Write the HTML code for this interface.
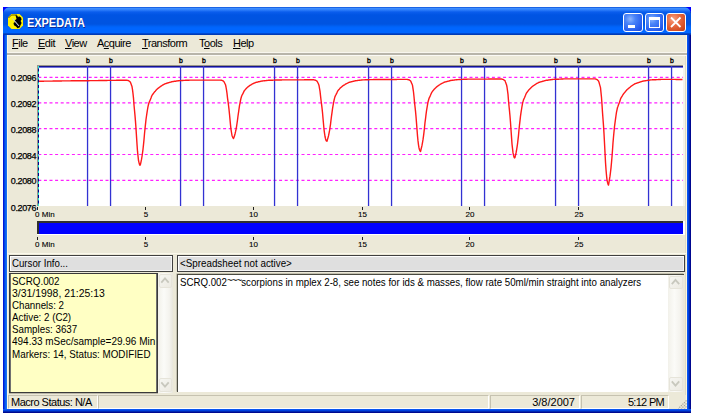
<!DOCTYPE html>
<html><head><meta charset="utf-8">
<style>
*{margin:0;padding:0;box-sizing:border-box}
html,body{width:703px;height:416px;overflow:hidden;background:#fff;font-family:"Liberation Sans",sans-serif;font-size:11px;color:#000;white-space:nowrap;letter-spacing:-0.5px}
.abs{position:absolute}
#win{left:3px;top:7px;width:688px;height:406px;background:linear-gradient(to right,#0018d8 0,#0018d8 1px,#0044e4 1px,#0044e4 2px,#0a5ff0 2px,#0a5ff0 3px,#1a70f2 3px,#1a70f2 4px,#0058ee 4px,#0058ee 684px,#0a55f0 684px,#0a55f0 685px,#0040e0 685px,#0040e0 686px,#0028b0 686px,#0028b0 687px,#000890 687px)}
#title{left:3px;top:7px;width:688px;height:28px;border-radius:7px 7px 0 0;
 background:linear-gradient(to bottom,#0a4fd6 0,#3d8eff 1.5px,#2c7cfa 3px,#0a5ded 5px,#0054e3 8px,#0054e0 17px,#0062f6 19.5px,#0066ff 21px,#0066ff 25.5px,#0048d0 26.5px,#0034a8 28px)}
#cl{left:3px;top:7px;width:5px;height:5px;background:#0000ff}
#cr{left:686px;top:7px;width:5px;height:5px;background:#0000ff}
#client{left:7px;top:35px;width:680px;height:374px;background:#ece9d8}
#bottomb{left:3px;top:409px;width:688px;height:4px;background:linear-gradient(to bottom,#0a55f0 0,#0a55f0 1px,#0040e0 1px,#0040e0 2px,#0028b0 2px,#0028b0 3px,#000890 3px)}
.ttl{left:26.5px;top:15px;font-weight:bold;font-size:13px;color:#fff;letter-spacing:0;transform:scaleX(0.84);transform-origin:0 0;text-shadow:1px 1px 0 #0a2a9a}
.btn{top:12.5px;width:19.5px;height:19.5px;border:1px solid #fff;border-radius:3px;
 background:radial-gradient(circle at 35% 30%,#8cb4ff 0,#4a84f8 30%,#2a60f0 70%,#1a48d8 100%)}
.close{background:radial-gradient(circle at 35% 30%,#f8a080 0,#e86a40 40%,#d04a20 80%,#b83a10 100%)}
.menu{top:37px;height:13px;line-height:13px}
.u{text-decoration:underline;text-underline-offset:0.5px}
.hdr{height:17px;background:#dfdfdf;border:1px solid #404040;line-height:15px;letter-spacing:0;padding-left:2px;box-shadow:inset 1px 1px 0 #fff,inset -1px -1px 0 #f4f4f4}
.txt{line-height:12.1px}
#yel{left:9px;top:273px;width:149px;height:120px;background:#ffffc4;border:1px solid #3a3a3a;box-shadow:inset 1px 0 0 #707070,inset -1px 0 0 #707070,0 0.5px 0 #8a8878}
#ta{left:177px;top:274px;width:507px;height:118px;background:#fff;border-top:1px solid #4a4a40;border-left:1px solid #4a4a40;box-shadow:-0.5px -0.5px 0 #9a9888}
.sb{background:linear-gradient(to right,#f2f1ea,#fbfbf8 40%,#f4f3ee 75%,#e8e6dc)}
.sbtn{border:1px solid #e6e4da;border-radius:2px;background:linear-gradient(135deg,#f6f6f2,#eceae2)}
.panel{top:395px;height:14px;border-top:1px solid #c6c2b0;border-left:1px solid #c6c2b0;border-bottom:1px solid #fff;border-right:1px solid #fff;line-height:12px}
</style></head><body>
<div id="win" class="abs"></div>
<div id="cl" class="abs"></div><div id="cr" class="abs"></div>
<div id="title" class="abs"></div>
<div id="client" class="abs"></div>
<div class="abs" style="left:7px;top:35px;width:1px;height:374px;background:#fdf8e0"></div>
<div class="abs" style="left:686px;top:35px;width:1px;height:374px;background:#fdf8e0"></div>
<div class="abs" style="left:685px;top:55px;width:1px;height:340px;background:#dedac6"></div>
<div id="bottomb" class="abs"></div>
<div class="abs" style="left:8px;top:14px;width:16px;height:16px">
<svg width="16" height="16"><path d="M3.5,0 H11.5 L15,3.5 V11.5 L11.5,15 H3.5 L0,11.5 V3.5 Z" fill="#fff200"/>
<path d="M0.5,4 L3.5,1 H9" stroke="#6a5a00" stroke-width="1" fill="none"/>
<path d="M7.5,1 L9.5,1.8 L10,3.2 L11,2.3 L13,3.5 L13.6,5.5 L12.6,7 L13.6,9 L12.6,11 L11.6,13.5 L9.5,14.2 L8,12.5 L6,11.2 L5.5,9 L7,8 L6.6,6.5 L8.5,5 L8,3 Z" fill="#000"/>
<path d="M4.5,4.5 L11,12" stroke="#c8c8d8" stroke-width="1.1"/></svg></div>
<div class="abs ttl">EXPEDATA</div>
<div class="abs btn" style="left:623px"><div class="abs" style="left:4px;top:11px;width:7px;height:3px;background:#fff"></div></div>
<div class="abs btn" style="left:644.5px"><div class="abs" style="left:3.5px;top:3.5px;width:10.5px;height:10.5px;border:1px solid #fff;border-top-width:3px"></div></div>
<div class="abs btn close" style="left:666px">
<svg class="abs" style="left:2px;top:2.5px" width="16" height="14"><path d="M2,1.5 L11.5,11 M11.5,1.5 L2,11" stroke="#fff" stroke-width="1.8"/></svg></div>
<div class="abs menu" style="left:12px"><span class="u">F</span>ile</div>
<div class="abs menu" style="left:38px"><span class="u">E</span>dit</div>
<div class="abs menu" style="left:65px"><span class="u">V</span>iew</div>
<div class="abs menu" style="left:97px">A<span class="u">c</span>quire</div>
<div class="abs menu" style="left:142px"><span class="u">T</span>ransform</div>
<div class="abs menu" style="left:199px">T<span class="u">o</span>ols</div>
<div class="abs menu" style="left:233px"><span class="u">H</span>elp</div>
<div class="abs" style="left:7px;top:52px;width:680px;height:1px;background:#f8f6ee"></div>
<div class="abs" style="left:7px;top:53px;width:680px;height:2px;background:#b8b5aa"></div>
<div class="abs" style="left:7px;top:55px;width:680px;height:1px;background:#fbfaf5"></div>
<svg width="703" height="416" style="position:absolute;left:0;top:0;letter-spacing:0">
<rect x="683" y="65" width="2" height="141" fill="#f5f4ec"/>
<rect x="37" y="65" width="646" height="141" fill="#ffffff"/>
<rect x="37" y="65" width="646" height="1" fill="#9a9588"/>
<rect x="37" y="65" width="1" height="141" fill="#9a9588"/>
<rect x="38" y="66" width="645" height="1" fill="#14148c"/>
<rect x="38" y="67" width="645" height="1" fill="#7070e0"/>
<line x1="38.5" y1="66" x2="38.5" y2="206" stroke="#20f0d0" stroke-width="1"/>
<line x1="38.5" y1="66" x2="38.5" y2="206" stroke="#000090" stroke-width="1" stroke-dasharray="3,2.5" stroke-dashoffset="-2.5"/>
<line x1="39" y1="77.4" x2="683" y2="77.4" stroke="#ff20ff" stroke-width="1.1" stroke-dasharray="3,2.6" stroke-dashoffset="0.7"/>
<line x1="39" y1="102.9" x2="683" y2="102.9" stroke="#ff20ff" stroke-width="1.1" stroke-dasharray="3,2.6" stroke-dashoffset="0.7"/>
<line x1="39" y1="128.6" x2="683" y2="128.6" stroke="#ff20ff" stroke-width="1.1" stroke-dasharray="3,2.6" stroke-dashoffset="0.7"/>
<line x1="39" y1="154.5" x2="683" y2="154.5" stroke="#ff20ff" stroke-width="1.1" stroke-dasharray="3,2.6" stroke-dashoffset="0.7"/>
<line x1="39" y1="180.4" x2="683" y2="180.4" stroke="#ff20ff" stroke-width="1.1" stroke-dasharray="3,2.6" stroke-dashoffset="0.7"/>
<rect x="86.9" y="66" width="1.3" height="140" fill="#3232d2"/>
<text transform="translate(88.00,63) scale(0.88,1)" x="0" y="0" font-family="Liberation Sans" font-size="7.8" fill="#000" stroke="#000" stroke-width="0.4" text-anchor="middle">b</text>
<rect x="109.9" y="66" width="1.3" height="140" fill="#3232d2"/>
<text transform="translate(111.00,63) scale(0.88,1)" x="0" y="0" font-family="Liberation Sans" font-size="7.8" fill="#000" stroke="#000" stroke-width="0.4" text-anchor="middle">b</text>
<rect x="179.9" y="66" width="1.3" height="140" fill="#3232d2"/>
<text transform="translate(181.00,63) scale(0.88,1)" x="0" y="0" font-family="Liberation Sans" font-size="7.8" fill="#000" stroke="#000" stroke-width="0.4" text-anchor="middle">b</text>
<rect x="202.9" y="66" width="1.3" height="140" fill="#3232d2"/>
<text transform="translate(204.00,63) scale(0.88,1)" x="0" y="0" font-family="Liberation Sans" font-size="7.8" fill="#000" stroke="#000" stroke-width="0.4" text-anchor="middle">b</text>
<rect x="273.9" y="66" width="1.3" height="140" fill="#3232d2"/>
<text transform="translate(275.00,63) scale(0.88,1)" x="0" y="0" font-family="Liberation Sans" font-size="7.8" fill="#000" stroke="#000" stroke-width="0.4" text-anchor="middle">b</text>
<rect x="296.9" y="66" width="1.3" height="140" fill="#3232d2"/>
<text transform="translate(298.00,63) scale(0.88,1)" x="0" y="0" font-family="Liberation Sans" font-size="7.8" fill="#000" stroke="#000" stroke-width="0.4" text-anchor="middle">b</text>
<rect x="367.9" y="66" width="1.3" height="140" fill="#3232d2"/>
<text transform="translate(369.00,63) scale(0.88,1)" x="0" y="0" font-family="Liberation Sans" font-size="7.8" fill="#000" stroke="#000" stroke-width="0.4" text-anchor="middle">b</text>
<rect x="390.9" y="66" width="1.3" height="140" fill="#3232d2"/>
<text transform="translate(392.00,63) scale(0.88,1)" x="0" y="0" font-family="Liberation Sans" font-size="7.8" fill="#000" stroke="#000" stroke-width="0.4" text-anchor="middle">b</text>
<rect x="460.9" y="66" width="1.3" height="140" fill="#3232d2"/>
<text transform="translate(462.00,63) scale(0.88,1)" x="0" y="0" font-family="Liberation Sans" font-size="7.8" fill="#000" stroke="#000" stroke-width="0.4" text-anchor="middle">b</text>
<rect x="483.9" y="66" width="1.3" height="140" fill="#3232d2"/>
<text transform="translate(485.00,63) scale(0.88,1)" x="0" y="0" font-family="Liberation Sans" font-size="7.8" fill="#000" stroke="#000" stroke-width="0.4" text-anchor="middle">b</text>
<rect x="554.9" y="66" width="1.3" height="140" fill="#3232d2"/>
<text transform="translate(556.00,63) scale(0.88,1)" x="0" y="0" font-family="Liberation Sans" font-size="7.8" fill="#000" stroke="#000" stroke-width="0.4" text-anchor="middle">b</text>
<rect x="577.9" y="66" width="1.3" height="140" fill="#3232d2"/>
<text transform="translate(579.00,63) scale(0.88,1)" x="0" y="0" font-family="Liberation Sans" font-size="7.8" fill="#000" stroke="#000" stroke-width="0.4" text-anchor="middle">b</text>
<rect x="647.9" y="66" width="1.3" height="140" fill="#3232d2"/>
<text transform="translate(649.00,63) scale(0.88,1)" x="0" y="0" font-family="Liberation Sans" font-size="7.8" fill="#000" stroke="#000" stroke-width="0.4" text-anchor="middle">b</text>
<rect x="670.9" y="66" width="1.3" height="140" fill="#3232d2"/>
<text transform="translate(672.00,63) scale(0.88,1)" x="0" y="0" font-family="Liberation Sans" font-size="7.8" fill="#000" stroke="#000" stroke-width="0.4" text-anchor="middle">b</text>
<path d="M39.0,81.2 L39.5,81.2 L40.0,81.2 L40.5,81.2 L41.0,81.2 L41.5,81.2 L42.0,81.2 L42.5,81.2 L43.0,81.2 L43.5,81.2 L44.0,81.1 L44.5,81.1 L45.0,81.1 L45.5,81.1 L46.0,81.1 L46.5,81.1 L47.0,81.1 L47.5,81.1 L48.0,81.1 L48.5,81.1 L49.0,81.1 L49.5,81.1 L50.0,81.1 L50.5,81.1 L51.0,81.1 L51.5,81.1 L52.0,81.1 L52.5,81.1 L53.0,81.0 L53.5,81.0 L54.0,81.0 L54.5,81.0 L55.0,81.0 L55.5,81.0 L56.0,81.0 L56.5,81.0 L57.0,81.0 L57.5,81.0 L58.0,81.0 L58.5,81.0 L59.0,81.0 L59.5,81.0 L60.0,81.0 L60.5,81.0 L61.0,81.0 L61.5,81.0 L62.0,80.9 L62.5,80.9 L63.0,80.9 L63.5,80.9 L64.0,80.9 L64.5,80.9 L65.0,80.9 L65.5,80.9 L66.0,80.9 L66.5,80.9 L67.0,80.9 L67.5,80.9 L68.0,80.9 L68.5,80.9 L69.0,80.9 L69.5,80.9 L70.0,80.9 L70.5,80.9 L71.0,80.8 L71.5,80.8 L72.0,80.8 L72.5,80.8 L73.0,80.8 L73.5,80.8 L74.0,80.8 L74.5,80.8 L75.0,80.8 L75.5,80.8 L76.0,80.8 L76.5,80.8 L77.0,80.8 L77.5,80.8 L78.0,80.8 L78.5,80.8 L79.0,80.8 L79.5,80.8 L80.0,80.7 L80.5,80.7 L81.0,80.7 L81.5,80.7 L82.0,80.7 L82.5,80.7 L83.0,80.7 L83.5,80.7 L84.0,80.7 L84.5,80.7 L85.0,80.7 L85.5,80.7 L86.0,80.7 L86.5,80.7 L87.0,80.7 L87.5,80.7 L88.0,80.7 L88.5,80.7 L89.0,80.7 L89.5,80.6 L90.0,80.6 L90.5,80.6 L91.0,80.6 L91.5,80.6 L92.0,80.6 L92.5,80.6 L93.0,80.6 L93.5,80.6 L94.0,80.6 L94.5,80.6 L95.0,80.6 L95.5,80.6 L96.0,80.6 L96.5,80.6 L97.0,80.6 L97.5,80.6 L98.0,80.6 L98.5,80.5 L99.0,80.5 L99.5,80.5 L100.0,80.5 L100.5,80.5 L101.0,80.5 L101.5,80.5 L102.0,80.5 L102.5,80.5 L103.0,80.5 L103.5,80.5 L104.0,80.5 L104.5,80.5 L105.0,80.5 L105.5,80.5 L106.0,80.5 L106.5,80.5 L107.0,80.5 L107.5,80.4 L108.0,80.4 L108.5,80.4 L109.0,80.4 L109.5,80.4 L110.0,80.4 L110.5,80.4 L111.0,80.4 L111.5,80.4 L112.0,80.4 L112.5,80.4 L113.0,80.4 L113.5,80.4 L114.0,80.4 L114.5,80.4 L115.0,80.4 L115.5,80.4 L116.0,80.4 L116.5,80.3 L117.0,80.3 L117.5,80.3 L118.0,80.3 L118.5,80.3 L119.0,80.3 L119.5,80.3 L120.0,80.3 L120.5,80.3 L121.0,80.3 L121.5,80.3 L122.0,80.3 L122.5,80.3 L123.0,80.3 L123.5,80.3 L124.0,80.3 L124.5,80.3 L125.0,80.3 L125.5,80.2 L126.0,80.2 L126.5,80.2 L127.0,80.3 L127.5,80.4 L128.0,80.5 L128.5,80.7 L129.0,81.0 L129.5,81.4 L130.0,81.8 L130.5,82.4 L131.0,83.8 L131.5,85.2 L132.0,86.6 L132.5,89.6 L133.0,93.6 L133.5,98.1 L134.0,105.0 L134.5,110.3 L135.0,115.6 L135.5,121.6 L136.0,128.6 L136.5,136.4 L137.0,144.1 L137.5,151.2 L138.0,155.8 L138.5,160.5 L139.0,162.6 L139.5,164.5 L140.0,165.3 L140.5,164.2 L141.0,161.8 L141.5,159.4 L142.0,156.5 L142.5,153.0 L143.0,149.3 L143.5,144.6 L144.0,139.6 L144.5,133.8 L145.0,128.7 L145.5,124.1 L146.0,119.5 L146.5,116.0 L147.0,112.7 L147.5,109.5 L148.0,106.6 L148.5,104.5 L149.0,102.8 L149.5,101.6 L150.0,100.4 L150.5,99.2 L151.0,98.0 L151.5,96.6 L152.0,95.4 L152.5,94.7 L153.0,94.0 L153.5,93.3 L154.0,92.6 L154.5,92.0 L155.0,91.4 L155.5,90.9 L156.0,90.3 L156.5,89.8 L157.0,89.3 L157.5,88.8 L158.0,88.4 L158.5,88.0 L159.0,87.6 L159.5,87.2 L160.0,86.9 L160.5,86.5 L161.0,86.1 L161.5,85.8 L162.0,85.5 L162.5,85.2 L163.0,84.9 L163.5,84.6 L164.0,84.3 L164.5,84.0 L165.0,83.8 L165.5,83.6 L166.0,83.5 L166.5,83.3 L167.0,83.2 L167.5,83.0 L168.0,82.9 L168.5,82.7 L169.0,82.6 L169.5,82.4 L170.0,82.3 L170.5,82.1 L171.0,82.0 L171.5,81.8 L172.0,81.7 L172.5,81.6 L173.0,81.5 L173.5,81.5 L174.0,81.4 L174.5,81.3 L175.0,81.3 L175.5,81.2 L176.0,81.1 L176.5,81.0 L177.0,81.0 L177.5,80.9 L178.0,80.8 L178.5,80.8 L179.0,80.7 L179.5,80.6 L180.0,80.6 L180.5,80.6 L181.0,80.6 L181.5,80.5 L182.0,80.5 L182.5,80.5 L183.0,80.5 L183.5,80.4 L184.0,80.4 L184.5,80.4 L185.0,80.4 L185.5,80.3 L186.0,80.3 L186.5,80.3 L187.0,80.3 L187.5,80.2 L188.0,80.2 L188.5,80.2 L189.0,80.2 L189.5,80.1 L190.0,80.1 L190.5,80.1 L191.0,80.1 L191.5,80.1 L192.0,80.1 L192.5,80.1 L193.0,80.1 L193.5,80.1 L194.0,80.1 L194.5,80.1 L195.0,80.1 L195.5,80.1 L196.0,80.1 L196.5,80.1 L197.0,80.1 L197.5,80.1 L198.0,80.1 L198.5,80.1 L199.0,80.1 L199.5,80.1 L200.0,80.1 L200.5,80.1 L201.0,80.1 L201.5,80.1 L202.0,80.1 L202.5,80.1 L203.0,80.1 L203.5,80.1 L204.0,80.1 L204.5,80.1 L205.0,80.1 L205.5,80.1 L206.0,80.1 L206.5,80.1 L207.0,80.1 L207.5,80.1 L208.0,80.1 L208.5,80.1 L209.0,80.1 L209.5,80.1 L210.0,80.1 L210.5,80.1 L211.0,80.1 L211.5,80.1 L212.0,80.1 L212.5,80.1 L213.0,80.1 L213.5,80.1 L214.0,80.1 L214.5,80.1 L215.0,80.1 L215.5,80.1 L216.0,80.1 L216.5,80.1 L217.0,80.1 L217.5,80.1 L218.0,80.1 L218.5,80.1 L219.0,80.1 L219.5,80.1 L220.0,80.1 L220.5,80.1 L221.0,80.2 L221.5,80.3 L222.0,80.4 L222.5,80.6 L223.0,80.9 L223.5,81.2 L224.0,81.7 L224.5,82.7 L225.0,83.7 L225.5,84.7 L226.0,87.0 L226.5,89.8 L227.0,93.3 L227.5,97.8 L228.0,101.4 L228.5,105.1 L229.0,109.3 L229.5,114.3 L230.0,119.6 L230.5,124.9 L231.0,129.3 L231.5,132.5 L232.0,135.4 L232.5,136.8 L233.0,137.9 L233.5,138.5 L234.0,137.3 L234.5,135.7 L235.0,134.0 L235.5,131.9 L236.0,129.5 L236.5,126.8 L237.0,123.5 L237.5,120.0 L238.0,116.0 L238.5,112.7 L239.0,109.1 L239.5,105.7 L240.0,103.1 L240.5,100.5 L241.0,98.2 L241.5,96.5 L242.0,95.3 L242.5,94.3 L243.0,93.4 L243.5,92.4 L244.0,91.3 L244.5,90.4 L245.0,89.9 L245.5,89.3 L246.0,88.8 L246.5,88.2 L247.0,87.7 L247.5,87.3 L248.0,86.9 L248.5,86.5 L249.0,86.1 L249.5,85.7 L250.0,85.4 L250.5,85.1 L251.0,84.8 L251.5,84.5 L252.0,84.2 L252.5,83.9 L253.0,83.7 L253.5,83.5 L254.0,83.2 L254.5,83.0 L255.0,82.8 L255.5,82.5 L256.0,82.4 L256.5,82.3 L257.0,82.2 L257.5,82.1 L258.0,81.9 L258.5,81.8 L259.0,81.7 L259.5,81.6 L260.0,81.5 L260.5,81.4 L261.0,81.2 L261.5,81.1 L262.0,81.0 L262.5,81.0 L263.0,80.9 L263.5,80.9 L264.0,80.8 L264.5,80.7 L265.0,80.7 L265.5,80.6 L266.0,80.6 L266.5,80.5 L267.0,80.5 L267.5,80.4 L268.0,80.4 L268.5,80.3 L269.0,80.3 L269.5,80.3 L270.0,80.3 L270.5,80.3 L271.0,80.2 L271.5,80.2 L272.0,80.2 L272.5,80.2 L273.0,80.1 L273.5,80.1 L274.0,80.1 L274.5,80.1 L275.0,80.1 L275.5,80.0 L276.0,80.0 L276.5,80.0 L277.0,80.0 L277.5,80.0 L278.0,80.0 L278.5,80.0 L279.0,80.0 L279.5,80.0 L280.0,80.0 L280.5,80.0 L281.0,80.0 L281.5,80.0 L282.0,79.9 L282.5,79.9 L283.0,79.9 L283.5,79.9 L284.0,79.9 L284.5,79.9 L285.0,79.9 L285.5,79.9 L286.0,79.9 L286.5,79.9 L287.0,79.9 L287.5,79.9 L288.0,79.9 L288.5,79.9 L289.0,79.9 L289.5,79.9 L290.0,79.9 L290.5,79.9 L291.0,79.9 L291.5,79.9 L292.0,79.9 L292.5,79.9 L293.0,79.9 L293.5,79.9 L294.0,79.9 L294.5,79.9 L295.0,79.9 L295.5,79.9 L296.0,79.9 L296.5,79.9 L297.0,79.9 L297.5,79.9 L298.0,79.9 L298.5,79.9 L299.0,79.9 L299.5,79.9 L300.0,79.9 L300.5,79.9 L301.0,79.9 L301.5,79.9 L302.0,79.9 L302.5,79.9 L303.0,79.9 L303.5,79.9 L304.0,79.9 L304.5,79.8 L305.0,79.8 L305.5,79.8 L306.0,79.8 L306.5,79.8 L307.0,79.8 L307.5,79.8 L308.0,79.8 L308.5,79.8 L309.0,79.8 L309.5,79.8 L310.0,79.8 L310.5,79.8 L311.0,79.8 L311.5,79.8 L312.0,79.8 L312.5,79.8 L313.0,79.8 L313.5,79.8 L314.0,79.9 L314.5,80.0 L315.0,80.1 L315.5,80.2 L316.0,80.5 L316.5,80.8 L317.0,81.1 L317.5,82.0 L318.0,83.0 L318.5,84.0 L319.0,85.4 L319.5,88.3 L320.0,91.2 L320.5,95.7 L321.0,100.0 L321.5,103.9 L322.0,107.9 L322.5,112.5 L323.0,118.2 L323.5,123.7 L324.0,129.3 L324.5,133.1 L325.0,136.5 L325.5,138.7 L326.0,140.3 L326.5,141.0 L327.0,141.2 L327.5,139.4 L328.0,137.7 L328.5,135.9 L329.0,133.4 L329.5,130.9 L330.0,127.7 L330.5,124.3 L331.0,120.2 L331.5,116.1 L332.0,112.7 L332.5,108.9 L333.0,105.8 L333.5,103.2 L334.0,100.5 L334.5,98.4 L335.0,96.6 L335.5,95.5 L336.0,94.6 L336.5,93.6 L337.0,92.6 L337.5,91.4 L338.0,90.6 L338.5,90.0 L339.0,89.4 L339.5,88.9 L340.0,88.3 L340.5,87.8 L341.0,87.4 L341.5,87.0 L342.0,86.5 L342.5,86.1 L343.0,85.7 L343.5,85.4 L344.0,85.1 L344.5,84.8 L345.0,84.5 L345.5,84.1 L346.0,83.8 L346.5,83.6 L347.0,83.4 L347.5,83.1 L348.0,82.9 L348.5,82.6 L349.0,82.4 L349.5,82.2 L350.0,82.1 L350.5,82.0 L351.0,81.9 L351.5,81.7 L352.0,81.6 L352.5,81.5 L353.0,81.4 L353.5,81.2 L354.0,81.1 L354.5,81.0 L355.0,80.9 L355.5,80.7 L356.0,80.7 L356.5,80.6 L357.0,80.6 L357.5,80.5 L358.0,80.4 L358.5,80.4 L359.0,80.3 L359.5,80.3 L360.0,80.2 L360.5,80.1 L361.0,80.1 L361.5,80.0 L362.0,80.0 L362.5,79.9 L363.0,79.9 L363.5,79.9 L364.0,79.9 L364.5,79.9 L365.0,79.8 L365.5,79.8 L366.0,79.8 L366.5,79.8 L367.0,79.7 L367.5,79.7 L368.0,79.7 L368.5,79.7 L369.0,79.7 L369.5,79.6 L370.0,79.6 L370.5,79.6 L371.0,79.6 L371.5,79.6 L372.0,79.6 L372.5,79.6 L373.0,79.6 L373.5,79.5 L374.0,79.5 L374.5,79.5 L375.0,79.5 L375.5,79.5 L376.0,79.5 L376.5,79.5 L377.0,79.5 L377.5,79.5 L378.0,79.5 L378.5,79.5 L379.0,79.5 L379.5,79.5 L380.0,79.5 L380.5,79.5 L381.0,79.5 L381.5,79.5 L382.0,79.5 L382.5,79.5 L383.0,79.5 L383.5,79.5 L384.0,79.5 L384.5,79.5 L385.0,79.5 L385.5,79.5 L386.0,79.5 L386.5,79.5 L387.0,79.5 L387.5,79.5 L388.0,79.5 L388.5,79.5 L389.0,79.5 L389.5,79.5 L390.0,79.5 L390.5,79.5 L391.0,79.5 L391.5,79.5 L392.0,79.5 L392.5,79.5 L393.0,79.5 L393.5,79.5 L394.0,79.5 L394.5,79.5 L395.0,79.5 L395.5,79.5 L396.0,79.5 L396.5,79.5 L397.0,79.4 L397.5,79.4 L398.0,79.4 L398.5,79.4 L399.0,79.4 L399.5,79.4 L400.0,79.4 L400.5,79.4 L401.0,79.4 L401.5,79.4 L402.0,79.4 L402.5,79.4 L403.0,79.4 L403.5,79.4 L404.0,79.4 L404.5,79.4 L405.0,79.4 L405.5,79.4 L406.0,79.4 L406.5,79.4 L407.0,79.4 L407.5,79.5 L408.0,79.6 L408.5,79.7 L409.0,79.8 L409.5,80.2 L410.0,80.5 L410.5,80.8 L411.0,81.7 L411.5,82.9 L412.0,84.1 L412.5,85.3 L413.0,88.7 L413.5,92.0 L414.0,96.8 L414.5,102.1 L415.0,106.6 L415.5,111.1 L416.0,116.5 L416.5,122.9 L417.0,129.4 L417.5,135.9 L418.0,140.9 L418.5,144.8 L419.0,147.9 L419.5,149.7 L420.0,150.8 L420.5,151.5 L421.0,149.5 L421.5,147.5 L422.0,145.4 L422.5,142.6 L423.0,139.7 L423.5,136.1 L424.0,132.1 L424.5,127.6 L425.0,122.6 L425.5,118.8 L426.0,114.6 L426.5,110.8 L427.0,107.9 L427.5,104.9 L428.0,102.1 L428.5,100.2 L429.0,98.5 L429.5,97.4 L430.0,96.4 L430.5,95.3 L431.0,94.1 L431.5,92.9 L432.0,92.0 L432.5,91.4 L433.0,90.7 L433.5,90.1 L434.0,89.5 L434.5,88.9 L435.0,88.4 L435.5,88.0 L436.0,87.5 L436.5,87.0 L437.0,86.6 L437.5,86.2 L438.0,85.9 L438.5,85.5 L439.0,85.2 L439.5,84.8 L440.0,84.5 L440.5,84.1 L441.0,83.9 L441.5,83.6 L442.0,83.3 L442.5,83.1 L443.0,82.8 L443.5,82.6 L444.0,82.3 L444.5,82.2 L445.0,82.0 L445.5,81.9 L446.0,81.8 L446.5,81.6 L447.0,81.5 L447.5,81.4 L448.0,81.2 L448.5,81.1 L449.0,81.0 L449.5,80.8 L450.0,80.7 L450.5,80.5 L451.0,80.5 L451.5,80.4 L452.0,80.3 L452.5,80.3 L453.0,80.2 L453.5,80.1 L454.0,80.1 L454.5,80.0 L455.0,79.9 L455.5,79.9 L456.0,79.8 L456.5,79.7 L457.0,79.7 L457.5,79.6 L458.0,79.6 L458.5,79.6 L459.0,79.5 L459.5,79.5 L460.0,79.5 L460.5,79.5 L461.0,79.4 L461.5,79.4 L462.0,79.4 L462.5,79.4 L463.0,79.4 L463.5,79.3 L464.0,79.3 L464.5,79.3 L465.0,79.3 L465.5,79.2 L466.0,79.2 L466.5,79.2 L467.0,79.2 L467.5,79.1 L468.0,79.1 L468.5,79.1 L469.0,79.1 L469.5,79.1 L470.0,79.1 L470.5,79.1 L471.0,79.1 L471.5,79.1 L472.0,79.1 L472.5,79.1 L473.0,79.1 L473.5,79.1 L474.0,79.1 L474.5,79.1 L475.0,79.1 L475.5,79.1 L476.0,79.1 L476.5,79.1 L477.0,79.1 L477.5,79.1 L478.0,79.1 L478.5,79.1 L479.0,79.1 L479.5,79.1 L480.0,79.1 L480.5,79.1 L481.0,79.1 L481.5,79.1 L482.0,79.1 L482.5,79.1 L483.0,79.1 L483.5,79.1 L484.0,79.1 L484.5,79.1 L485.0,79.1 L485.5,79.1 L486.0,79.1 L486.5,79.1 L487.0,79.1 L487.5,79.1 L488.0,79.1 L488.5,79.0 L489.0,79.0 L489.5,79.0 L490.0,79.0 L490.5,79.0 L491.0,79.0 L491.5,79.0 L492.0,79.0 L492.5,79.0 L493.0,79.0 L493.5,79.0 L494.0,79.0 L494.5,79.0 L495.0,79.0 L495.5,79.0 L496.0,79.0 L496.5,79.0 L497.0,79.0 L497.5,79.0 L498.0,79.0 L498.5,79.0 L499.0,79.0 L499.5,79.0 L500.0,79.0 L500.5,79.0 L501.0,79.0 L501.5,79.0 L502.0,79.1 L502.5,79.3 L503.0,79.4 L503.5,79.6 L504.0,80.0 L504.5,80.4 L505.0,80.7 L505.5,82.1 L506.0,83.4 L506.5,84.7 L507.0,87.0 L507.5,90.7 L508.0,94.4 L508.5,100.7 L509.0,106.0 L509.5,110.9 L510.0,116.3 L510.5,122.5 L511.0,129.8 L511.5,136.9 L512.0,144.0 L512.5,148.4 L513.0,152.7 L513.5,155.1 L514.0,157.1 L514.5,157.9 L515.0,157.4 L515.5,155.2 L516.0,153.0 L516.5,150.5 L517.0,147.3 L517.5,144.0 L518.0,139.7 L518.5,135.3 L519.0,129.8 L519.5,124.9 L520.0,120.6 L520.5,116.2 L521.0,112.6 L521.5,109.5 L522.0,106.4 L522.5,103.6 L523.0,101.6 L523.5,99.9 L524.0,98.8 L524.5,97.7 L525.0,96.5 L525.5,95.3 L526.0,94.0 L526.5,93.0 L527.0,92.3 L527.5,91.7 L528.0,91.0 L528.5,90.4 L529.0,89.7 L529.5,89.2 L530.0,88.7 L530.5,88.2 L531.0,87.7 L531.5,87.2 L532.0,86.8 L532.5,86.4 L533.0,86.0 L533.5,85.7 L534.0,85.3 L534.5,85.0 L535.0,84.6 L535.5,84.3 L536.0,84.0 L536.5,83.7 L537.0,83.4 L537.5,83.1 L538.0,82.9 L538.5,82.6 L539.0,82.3 L539.5,82.2 L540.0,82.1 L540.5,81.9 L541.0,81.8 L541.5,81.6 L542.0,81.5 L542.5,81.3 L543.0,81.2 L543.5,81.1 L544.0,80.9 L544.5,80.8 L545.0,80.6 L545.5,80.5 L546.0,80.4 L546.5,80.3 L547.0,80.2 L547.5,80.2 L548.0,80.1 L548.5,80.0 L549.0,80.0 L549.5,79.9 L550.0,79.8 L550.5,79.7 L551.0,79.7 L551.5,79.6 L552.0,79.5 L552.5,79.5 L553.0,79.4 L553.5,79.4 L554.0,79.4 L554.5,79.3 L555.0,79.3 L555.5,79.3 L556.0,79.3 L556.5,79.3 L557.0,79.2 L557.5,79.2 L558.0,79.2 L558.5,79.2 L559.0,79.1 L559.5,79.1 L560.0,79.1 L560.5,79.1 L561.0,79.0 L561.5,79.0 L562.0,79.0 L562.5,79.0 L563.0,79.0 L563.5,78.9 L564.0,78.9 L564.5,78.9 L565.0,78.9 L565.5,78.9 L566.0,78.9 L566.5,78.9 L567.0,78.9 L567.5,78.9 L568.0,78.9 L568.5,78.9 L569.0,78.9 L569.5,78.9 L570.0,78.9 L570.5,78.9 L571.0,78.9 L571.5,78.9 L572.0,78.9 L572.5,78.9 L573.0,78.9 L573.5,78.9 L574.0,78.9 L574.5,78.9 L575.0,78.9 L575.5,78.9 L576.0,78.9 L576.5,78.9 L577.0,78.9 L577.5,78.9 L578.0,78.9 L578.5,78.9 L579.0,78.9 L579.5,78.9 L580.0,78.9 L580.5,78.9 L581.0,78.9 L581.5,78.9 L582.0,78.9 L582.5,78.9 L583.0,78.9 L583.5,78.9 L584.0,78.9 L584.5,78.9 L585.0,78.9 L585.5,78.9 L586.0,78.9 L586.5,78.9 L587.0,78.9 L587.5,78.9 L588.0,78.9 L588.5,78.9 L589.0,78.9 L589.5,78.9 L590.0,78.9 L590.5,78.9 L591.0,78.9 L591.5,78.9 L592.0,78.9 L592.5,78.9 L593.0,78.9 L593.5,78.9 L594.0,78.9 L594.5,78.9 L595.0,78.9 L595.5,79.0 L596.0,79.2 L596.5,79.4 L597.0,79.6 L597.5,80.1 L598.0,80.6 L598.5,81.1 L599.0,82.3 L599.5,84.1 L600.0,85.9 L600.5,87.6 L601.0,92.6 L601.5,97.5 L602.0,104.6 L602.5,112.4 L603.0,119.0 L603.5,125.6 L604.0,133.6 L604.5,143.0 L605.0,152.6 L605.5,162.2 L606.0,169.5 L606.5,175.2 L607.0,179.8 L607.5,182.4 L608.0,184.1 L608.5,185.1 L609.0,182.2 L609.5,179.2 L610.0,176.2 L610.5,172.1 L611.0,167.8 L611.5,162.5 L612.0,156.7 L612.5,150.0 L613.0,142.7 L613.5,137.0 L614.0,131.8 L614.5,126.6 L615.0,122.9 L615.5,119.2 L616.0,115.5 L616.5,112.2 L617.0,109.8 L617.5,107.5 L618.0,106.2 L618.5,104.8 L619.0,103.5 L619.5,102.2 L620.0,100.7 L620.5,99.1 L621.0,97.9 L621.5,97.1 L622.0,96.3 L622.5,95.5 L623.0,94.7 L623.5,94.0 L624.0,93.2 L624.5,92.7 L625.0,92.1 L625.5,91.5 L626.0,90.9 L626.5,90.3 L627.0,89.7 L627.5,89.3 L628.0,88.9 L628.5,88.5 L629.0,88.0 L629.5,87.6 L630.0,87.2 L630.5,86.7 L631.0,86.3 L631.5,86.0 L632.0,85.7 L632.5,85.3 L633.0,85.0 L633.5,84.7 L634.0,84.4 L634.5,84.0 L635.0,83.7 L635.5,83.6 L636.0,83.4 L636.5,83.2 L637.0,83.1 L637.5,82.9 L638.0,82.7 L638.5,82.6 L639.0,82.4 L639.5,82.2 L640.0,82.1 L640.5,81.9 L641.0,81.7 L641.5,81.6 L642.0,81.4 L642.5,81.2 L643.0,81.1 L643.5,81.0 L644.0,81.0 L644.5,80.9 L645.0,80.8 L645.5,80.7 L646.0,80.6 L646.5,80.6 L647.0,80.5 L647.5,80.4 L648.0,80.3 L648.5,80.3 L649.0,80.2 L649.5,80.1 L650.0,80.0 L650.5,79.9 L651.0,79.9 L651.5,79.9 L652.0,79.9 L652.5,79.8 L653.0,79.8 L653.5,79.8 L654.0,79.8 L654.5,79.7 L655.0,79.7 L655.5,79.7 L656.0,79.7 L656.5,79.6 L657.0,79.6 L657.5,79.6 L658.0,79.6 L658.5,79.5 L659.0,79.5 L659.5,79.5 L660.0,79.5 L660.5,79.5 L661.0,79.4 L661.5,79.4 L662.0,79.4 L662.5,79.4 L663.0,79.4 L663.5,79.4 L664.0,79.4 L664.5,79.4 L665.0,79.4 L665.5,79.4 L666.0,79.4 L666.5,79.4 L667.0,79.4 L667.5,79.4 L668.0,79.4 L668.5,79.4 L669.0,79.4 L669.5,79.4 L670.0,79.4 L670.5,79.4 L671.0,79.4 L671.5,79.4 L672.0,79.4 L672.5,79.4 L673.0,79.4 L673.5,79.4 L674.0,79.4 L674.5,79.4 L675.0,79.4 L675.5,79.4 L676.0,79.5 L676.5,79.5 L677.0,79.5 L677.5,79.5 L678.0,79.5 L678.5,79.5 L679.0,79.5 L679.5,79.5 L680.0,79.5 L680.5,79.5 L681.0,79.5 L681.5,79.5 L682.0,79.5 L682.5,79.5" fill="none" stroke="#ff1a1a" stroke-width="1.4" stroke-linejoin="round"/>
<text x="36" y="81.4" font-family="Liberation Sans" font-size="9" fill="#000" stroke="#000" stroke-width="0.25" text-anchor="end" letter-spacing="-0.4">0.2096</text>
<text x="36" y="106.9" font-family="Liberation Sans" font-size="9" fill="#000" stroke="#000" stroke-width="0.25" text-anchor="end" letter-spacing="-0.4">0.2092</text>
<text x="36" y="132.7" font-family="Liberation Sans" font-size="9" fill="#000" stroke="#000" stroke-width="0.25" text-anchor="end" letter-spacing="-0.4">0.2088</text>
<text x="36" y="158.5" font-family="Liberation Sans" font-size="9" fill="#000" stroke="#000" stroke-width="0.25" text-anchor="end" letter-spacing="-0.4">0.2084</text>
<text x="36" y="184.4" font-family="Liberation Sans" font-size="9" fill="#000" stroke="#000" stroke-width="0.25" text-anchor="end" letter-spacing="-0.4">0.2080</text>
<text x="36" y="210.9" font-family="Liberation Sans" font-size="9" fill="#000" stroke="#000" stroke-width="0.25" text-anchor="end" letter-spacing="-0.4">0.2076</text>
<rect x="37" y="207" width="1" height="3" fill="#202020"/>
<text x="35.1" y="217" font-family="Liberation Sans" font-size="8" fill="#000" stroke="#000" stroke-width="0.12">0 Min</text>
<rect x="145" y="207" width="1" height="3" fill="#202020"/>
<text x="146.1" y="217" font-family="Liberation Sans" font-size="8" fill="#000" stroke="#000" stroke-width="0.12" text-anchor="middle">5</text>
<rect x="253" y="207" width="1" height="3" fill="#202020"/>
<text x="253.5" y="217" font-family="Liberation Sans" font-size="8" fill="#000" stroke="#000" stroke-width="0.12" text-anchor="middle">10</text>
<rect x="362" y="207" width="1" height="3" fill="#202020"/>
<text x="362.5" y="217" font-family="Liberation Sans" font-size="8" fill="#000" stroke="#000" stroke-width="0.12" text-anchor="middle">15</text>
<rect x="469" y="207" width="1" height="3" fill="#202020"/>
<text x="469.9" y="217" font-family="Liberation Sans" font-size="8" fill="#000" stroke="#000" stroke-width="0.12" text-anchor="middle">20</text>
<rect x="578" y="207" width="1" height="3" fill="#202020"/>
<text x="579.0" y="217" font-family="Liberation Sans" font-size="8" fill="#000" stroke="#000" stroke-width="0.12" text-anchor="middle">25</text>
<rect x="37" y="237" width="1" height="3" fill="#202020"/>
<text x="35.1" y="247" font-family="Liberation Sans" font-size="8" fill="#000" stroke="#000" stroke-width="0.12">0 Min</text>
<rect x="145" y="237" width="1" height="3" fill="#202020"/>
<text x="146.1" y="247" font-family="Liberation Sans" font-size="8" fill="#000" stroke="#000" stroke-width="0.12" text-anchor="middle">5</text>
<rect x="253" y="237" width="1" height="3" fill="#202020"/>
<text x="253.5" y="247" font-family="Liberation Sans" font-size="8" fill="#000" stroke="#000" stroke-width="0.12" text-anchor="middle">10</text>
<rect x="362" y="237" width="1" height="3" fill="#202020"/>
<text x="362.5" y="247" font-family="Liberation Sans" font-size="8" fill="#000" stroke="#000" stroke-width="0.12" text-anchor="middle">15</text>
<rect x="469" y="237" width="1" height="3" fill="#202020"/>
<text x="469.9" y="247" font-family="Liberation Sans" font-size="8" fill="#000" stroke="#000" stroke-width="0.12" text-anchor="middle">20</text>
<rect x="578" y="237" width="1" height="3" fill="#202020"/>
<text x="579.0" y="247" font-family="Liberation Sans" font-size="8" fill="#000" stroke="#000" stroke-width="0.12" text-anchor="middle">25</text>
<rect x="37" y="221" width="648" height="14" fill="#ffffff"/>
<rect x="37" y="221" width="646" height="13" fill="#303030"/>
<rect x="39" y="223" width="644" height="11" fill="#0000ff"/>
</svg>
<div class="abs" style="left:7px;top:253px;width:680px;height:1px;background:#fbf9ec"></div>
<div class="abs hdr" style="left:9px;top:255px;width:164px"><div style="transform:scaleX(0.88);transform-origin:0 0">Cursor Info...</div></div>
<div class="abs hdr" style="left:177px;top:255px;width:508px"><div style="transform:scaleX(0.892);transform-origin:0 0">&lt;Spreadsheet not active&gt;</div></div>
<div id="yel" class="abs txt" style="padding:1px 0 0 1.5px;letter-spacing:0"><div style="height:12.1px;transform:scaleX(0.894);transform-origin:0 0">SCRQ.002</div><div style="height:12.1px;transform:scaleX(0.948);transform-origin:0 0">3/31/1998, 21:25:13</div><div style="height:12.1px;transform:scaleX(0.885);transform-origin:0 0">Channels: 2</div><div style="height:12.1px;transform:scaleX(0.887);transform-origin:0 0">Active: 2 (C2)</div><div style="height:12.1px;transform:scaleX(0.889);transform-origin:0 0">Samples: 3637</div><div style="height:12.1px;transform:scaleX(0.906);transform-origin:0 0">494.33 mSec/sample=29.96 Min</div><div style="height:12.1px;transform:scaleX(0.892);transform-origin:0 0">Markers: 14, Status: MODIFIED</div></div>
<div class="abs sb" style="left:158px;top:273px;width:15px;height:120px"></div>
<div class="abs sbtn" style="left:159px;top:274px;width:13px;height:14px"><svg width="13" height="14" style="position:absolute;left:-1px;top:-1px"><path d="M2.3,8.7 L6.0,4.4 L9.7,8.7" fill="none" stroke="#c8c8be" stroke-width="1.8"/></svg></div>
<div class="abs sbtn" style="left:159px;top:378px;width:13px;height:14px"><svg width="13" height="14" style="position:absolute;left:-1px;top:-1px"><path d="M2.3,4.3 L6.0,8.6 L9.7,4.3" fill="none" stroke="#c8c8be" stroke-width="1.8"/></svg></div>
<div id="ta" class="abs txt" style="padding:1px 0 0 2px;letter-spacing:0"><div style="transform:scaleX(0.8815);transform-origin:0 0">SCRQ.002<span style="position:relative;top:-2px;letter-spacing:-1px">~~~</span>scorpions in mplex 2-8, see notes for ids &amp; masses, flow rate 50ml/min straight into analyzers</div></div>
<div class="abs sb" style="left:668px;top:275px;width:16px;height:117px"></div>
<div class="abs sbtn" style="left:669px;top:276px;width:14px;height:13px"><svg width="14" height="13" style="position:absolute;left:-1px;top:-1px"><path d="M2.8,8.2 L6.5,3.9 L10.2,8.2" fill="none" stroke="#c8c8be" stroke-width="1.8"/></svg></div>
<div class="abs sbtn" style="left:669px;top:377px;width:14px;height:14px"><svg width="14" height="14" style="position:absolute;left:-1px;top:-1px"><path d="M2.8,4.3 L6.5,8.6 L10.2,4.3" fill="none" stroke="#c8c8be" stroke-width="1.8"/></svg></div>
<div class="abs panel" style="left:8px;width:90px;padding-left:2px">Macro Status: N/A</div>
<div class="abs panel" style="left:98px;width:391px"></div>
<div class="abs panel" style="left:490px;width:90px;text-align:right;padding-right:4px;letter-spacing:0">3/8/2007</div>
<div class="abs panel" style="left:581px;width:88px;text-align:right;padding-right:4px;letter-spacing:-0.7px">5:12 PM</div>
<svg class="abs" style="left:678px;top:400px" width="9" height="9"><path d="M8.5,0.5 L0.5,8.5 M8.5,3.5 L3.5,8.5 M8.5,6.5 L6.5,8.5" stroke="#a8a496" stroke-width="1.2" stroke-dasharray="1.3,0.9"/></svg>
</body></html>
